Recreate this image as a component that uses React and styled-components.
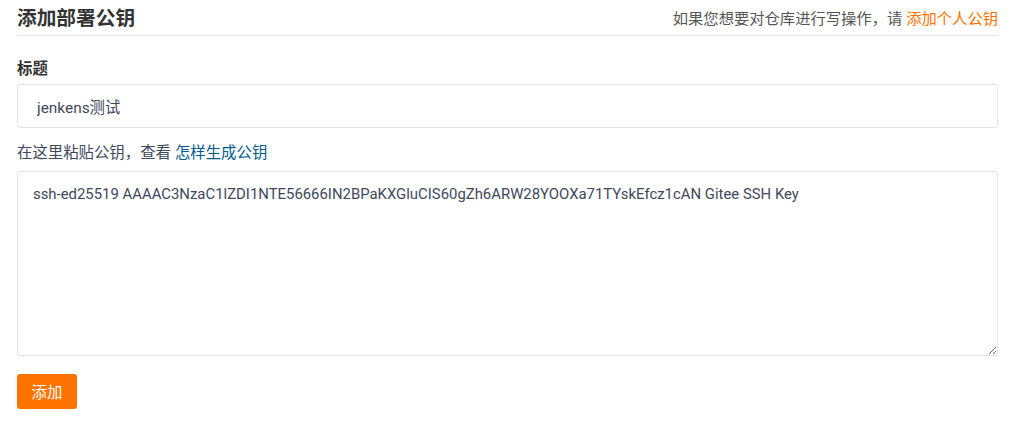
import React from "react";
import styled, { createGlobalStyle } from "styled-components";

const Global = createGlobalStyle`
  html, body { margin: 0; padding: 0; background: #fff; }
  body {
    font-family: "Noto Sans", "Noto Sans CJK SC", sans-serif;
    color: #40485b;
    font-size: 15.4px;
  }
  * { box-sizing: border-box; }
`;

const Page = styled.div`
  padding: 0 22px 0 17px;
  width: 1020px;
`;

const Header = styled.div`
  display: flex;
  justify-content: space-between;
  align-items: flex-end;
  height: 36px;
  padding-bottom: 4px;
  border-bottom: 1px solid #e3e3e3;
`;

const Title = styled.h3`
  margin: 0;
  font-size: 19.7px;
  font-weight: 700;
  color: #333;
  line-height: 26px;
`;

const Hint = styled.div`
  font-size: 15.3px;
  color: #555;
  line-height: 20px;
  padding-bottom: 3px;
`;

const Link = styled.a`
  color: ${(p) => p.$color};
  text-decoration: none;
`;

const Field = styled.div`
  display: flex;
  flex-direction: column;
  margin-top: ${(p) => p.$mt}px;
`;

const Label = styled.label`
  font-size: 15.4px;
  font-weight: 700;
  color: #333;
  line-height: 20px;
  margin-bottom: ${(p) => p.$mb}px;
`;

const PlainLabel = styled.div`
  font-size: 15.4px;
  color: #40485b;
  line-height: 20px;
  margin-bottom: ${(p) => p.$mb}px;
`;

const Input = styled.input`
  height: 44px;
  border: 1px solid #e3e3e8;
  border-radius: 3px;
  padding: 0 19px;
  font-family: Roboto, "Noto Sans CJK SC", sans-serif;
  font-size: 15.4px;
  color: #40485b;
  outline: none;
`;

const TextArea = styled.textarea`
  height: 185px;
  border: 1px solid #e3e3e8;
  border-radius: 3px;
  padding: 12px 15px;
  font-family: Roboto, "Noto Sans CJK SC", sans-serif;
  font-size: 14.9px;
  line-height: 20px;
  color: #40485b;
  outline: none;
  resize: vertical;
`;

const Button = styled.button`
  margin-top: 18px;
  width: 60px;
  height: 35px;
  border: none;
  border-radius: 3px;
  background: #fe7300;
  color: #fff;
  font: inherit;
  font-size: 15.4px;
  cursor: pointer;
  align-self: flex-start;
`;

export default function App() {
  return (
    <Page>
      <Global />
      <Header>
        <Title>添加部署公钥</Title>
        <Hint>
          如果您想要对仓库进行写操作，请 <Link $color="#fe7300" href="#">添加个人公钥</Link>
        </Hint>
      </Header>
      <Field $mt={23}>
        <Label $mb={5}>标题</Label>
        <Input defaultValue="jenkens测试" />
      </Field>
      <Field $mt={15}>
        <PlainLabel $mb={8}>
          在这里粘贴公钥，查看 <Link $color="#005a8c" href="#">怎样生成公钥</Link>
        </PlainLabel>
        <TextArea defaultValue="ssh-ed25519 AAAAC3NzaC1lZDI1NTE56666IN2BPaKXGluCIS60gZh6ARW28YOOXa71TYskEfcz1cAN Gitee SSH Key" />
        <Button>添加</Button>
      </Field>
    </Page>
  );
}
